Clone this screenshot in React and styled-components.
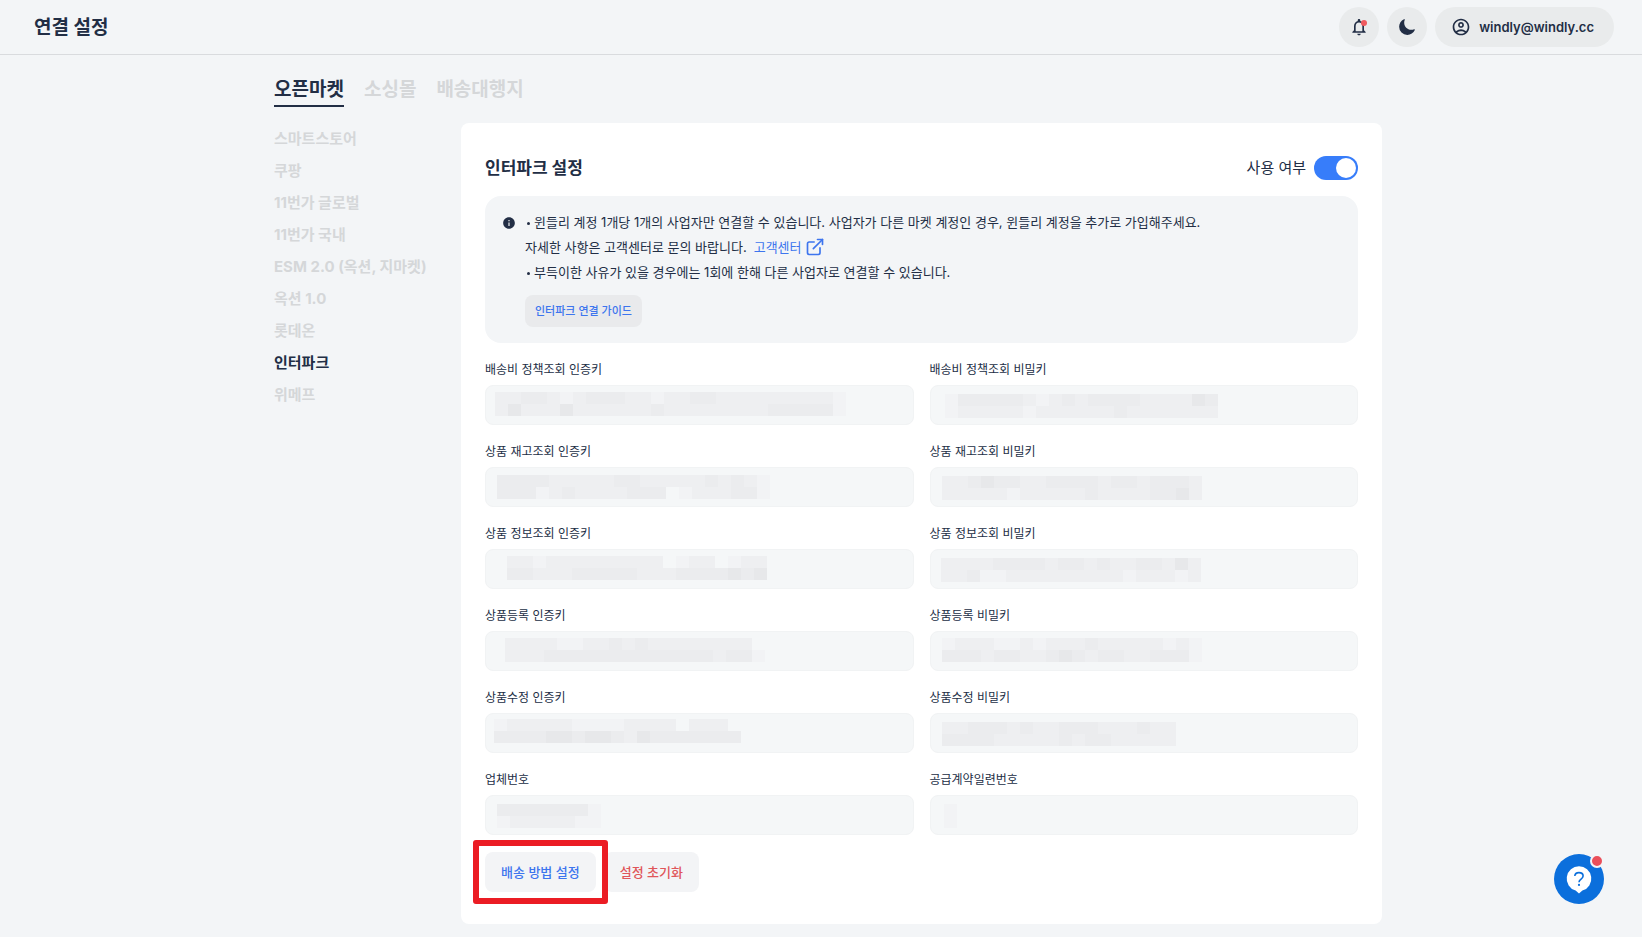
import React, { useState } from "react";
import styled, { createGlobalStyle } from "styled-components";
import {
  MdInfo,
  MdNotificationsNone,
  MdOutlineAccountCircle,
} from "react-icons/md";
import { IoMoon } from "react-icons/io5";
import { FiExternalLink } from "react-icons/fi";

const colors = {
  page: "#f3f5f7",
  text: "#222e45",
  muted: "#d5d7d9",
  line: "#d9dbde",
  chip: "#e9ebec",
  blue: "#3d75ee",
  red: "#e0565a",
};

const GlobalStyle = createGlobalStyle`
  * {
    box-sizing: border-box;
  }
  body {
    margin: 0;
    background: ${colors.page};
    color: ${colors.text};
    font-family: Inter, "Noto Sans CJK KR", sans-serif;
    font-size: 13px;
  }
  button,
  input {
    font: inherit;
    color: inherit;
  }
  h1,
  h2,
  p,
  ul {
    margin: 0;
    padding: 0;
  }
`;

const Header = styled.header`
  display: flex;
  align-items: center;
  justify-content: space-between;
  height: 55px;
  padding: 0 28px 0 34px;
  border-bottom: 1px solid ${colors.line};
`;

const PageTitle = styled.h1`
  padding-top: 2px;
  font-size: 19px;
  line-height: 28px;
  font-weight: 700;
`;

const HeaderActions = styled.div`
  display: flex;
  gap: 8px;
`;

const RoundButton = styled.button`
  position: relative;
  display: flex;
  align-items: center;
  justify-content: center;
  width: 40px;
  height: 40px;
  padding: 0;
  border: none;
  border-radius: 50%;
  background: ${colors.chip};
  cursor: pointer;
`;

const AlertDot = styled.span`
  position: absolute;
  top: 13px;
  right: 12px;
  width: 6px;
  height: 6px;
  border-radius: 50%;
  background: #f05a5f;
`;

const AccountButton = styled.button`
  display: flex;
  align-items: center;
  gap: 8px;
  height: 40px;
  padding: 0 20px 0 16px;
  border: none;
  border-radius: 20px;
  background: ${colors.chip};
  font-size: 13px;
  font-weight: 600;
  cursor: pointer;
`;

const Main = styled.main`
  max-width: 1122px;
  margin: 0 auto;
  padding: 20px 0 13px 14px;
`;

const Tabs = styled.nav`
  display: flex;
  gap: 20px;
`;

const Tab = styled.a`
  border-bottom: 2px solid
    ${({ $active }) => ($active ? colors.text : "transparent")};
  color: ${({ $active }) => ($active ? colors.text : colors.muted)};
  font-size: 19px;
  line-height: 30px;
  font-weight: 700;
  text-decoration: none;
`;

const Columns = styled.div`
  display: grid;
  grid-template-columns: 187px minmax(0, 1fr);
  margin-top: 16px;
`;

const MarketList = styled.ul`
  list-style: none;
`;

const MarketLink = styled.a`
  display: block;
  color: ${({ $active }) => ($active ? colors.text : colors.muted)};
  font-size: 15px;
  line-height: 32px;
  font-weight: 700;
  text-decoration: none;
  white-space: nowrap;
`;

const Card = styled.section`
  padding: 24px 24px 32px;
  border-radius: 8px;
  background: #fff;
`;

const CardHeader = styled.div`
  display: flex;
  align-items: center;
  justify-content: space-between;
  padding: 9px 0 16px;
`;

const CardTitle = styled.h2`
  font-size: 17px;
  line-height: 24px;
  font-weight: 700;
`;

const SwitchLabel = styled.label`
  display: flex;
  align-items: center;
  gap: 8px;
  font-size: 15px;
  line-height: 24px;
  cursor: pointer;
`;

const Switch = styled.input`
  appearance: none;
  display: flex;
  width: 44px;
  height: 24px;
  margin: 0;
  padding: 2px;
  border-radius: 12px;
  background: #c9ccd1;
  cursor: pointer;

  &::before {
    content: "";
    width: 20px;
    height: 20px;
    border-radius: 50%;
    background: #fff;
  }

  &:checked {
    justify-content: flex-end;
    background: #377dfa;
  }
`;

const Notice = styled.div`
  display: flex;
  gap: 8px;
  padding: 16px;
  border-radius: 16px;
  background: ${colors.page};
`;

const NoticeIcon = styled.span`
  display: flex;
  align-items: center;
  width: 16px;
  height: 22px;
  justify-content: center;
`;

const NoticeBody = styled.div`
  display: flex;
  flex-direction: column;
  align-items: flex-start;
  gap: 5px;
  line-height: 20px;
`;

const NoticeLine = styled.p`
  display: flex;
  align-items: center;
  gap: 7px;
  min-height: 20px;
`;

const NoticeItem = styled(NoticeLine)`
  gap: 4px;

  &::before {
    content: "";
    width: 3px;
    height: 3px;
    margin: 2px 0 0 2px;
    border-radius: 50%;
    background: currentColor;
  }
`;

const HelpLink = styled.a`
  display: inline-flex;
  align-items: center;
  gap: 3px;
  color: ${colors.blue};
  text-decoration: none;
`;

const GuideButton = styled.button`
  height: 32px;
  margin-top: 8px;
  padding: 0 10px;
  border: none;
  border-radius: 8px;
  background: #e9eaec;
  color: ${colors.blue};
  font-size: 11px;
  font-weight: 500;
  cursor: pointer;
`;

const FieldGrid = styled.div`
  display: grid;
  grid-template-columns: repeat(2, minmax(0, 1fr));
  gap: 16px;
  margin-top: 16px;
`;

const FieldBox = styled.div`
  display: flex;
  flex-direction: column;
  gap: 4px;
`;

const FieldLabel = styled.label`
  font-size: 12px;
  line-height: 22px;
`;

const InputWrap = styled.div`
  position: relative;
  display: flex;
`;

const TextInput = styled.input`
  width: 100%;
  height: 40px;
  padding: 0 12px;
  border: 1px solid #f1f3f4;
  border-radius: 8px;
  background: #f5f7f8;
  outline: none;
`;

const MaskLayer = styled.svg`
  position: absolute;
  top: 0;
  left: 0;
  pointer-events: none;
`;

const Actions = styled.div`
  display: flex;
  gap: 8px;
  margin-top: 17px;
`;

const Highlight = styled.div`
  position: relative;

  &::after {
    content: "";
    position: absolute;
    inset: -12px;
    border: 6px solid #eb1c24;
    border-radius: 3px;
    pointer-events: none;
  }
`;

const ActionButton = styled.button`
  height: 40px;
  padding: 0 16px 2px;
  border: none;
  border-radius: 8px;
  background: #f3f4f6;
  color: ${({ $danger }) => ($danger ? colors.red : colors.blue)};
  font-weight: 500;
  cursor: pointer;
`;

const ChatButton = styled.button`
  position: fixed;
  right: 38px;
  bottom: 33px;
  width: 50px;
  height: 50px;
  padding: 0;
  border: none;
  border-radius: 50%;
  background: #0b6fdc;
  cursor: pointer;
`;

const ChatDot = styled.span`
  position: absolute;
  top: 0;
  right: 0;
  width: 14px;
  height: 14px;
  border: 2px solid ${colors.page};
  border-radius: 50%;
  background: #ea4f5a;
`;

const tabs = ["오픈마켓", "소싱몰", "배송대행지"];

const markets = [
  "스마트스토어",
  "쿠팡",
  "11번가 글로벌",
  "11번가 국내",
  "ESM 2.0 (옥션, 지마켓)",
  "옥션 1.0",
  "롯데온",
  "인터파크",
  "위메프",
];

// mask: two rows of 13x12 blocks starting at x, y; each digit is a shade
const fields = [
  {
    id: "shipping-key",
    label: "배송비 정책조회 인증키",
    x: 10,
    y: 7,
    mask: ["223321233322122332222222221", "242224222222322222222333331"],
  },
  {
    id: "shipping-secret",
    label: "배송비 정책조회 비밀키",
    x: 15,
    y: 9,
    mask: ["133333212323333222243", "122222122222232222222"],
  },
  {
    id: "stock-key",
    label: "상품 재고조회 인증키",
    x: 12,
    y: 8,
    mask: ["333322222332222232321", "333123222233301222331"],
  },
  {
    id: "stock-secret",
    label: "상품 재고조회 비밀키",
    x: 12,
    y: 9,
    mask: ["22343322333323323332", "22222122222322223342"],
  },
  {
    id: "info-key",
    label: "상품 정보조회 인증키",
    x: 22,
    y: 7,
    mask: ["22122222222201220122", "33222333332223333434"],
  },
  {
    id: "info-secret",
    label: "상품 정보조회 비밀키",
    x: 11,
    y: 9,
    mask: ["22223333233232233242", "22311222222222122212"],
  },
  {
    id: "create-key",
    label: "상품등록 인증키",
    x: 20,
    y: 7,
    mask: ["22221122323222222220", "22233333333333332331"],
  },
  {
    id: "create-secret",
    label: "상품등록 비밀키",
    x: 12,
    y: 7,
    mask: ["12221121222322222121", "33323322343233223331"],
  },
  {
    id: "edit-key",
    label: "상품수정 인증키",
    x: 9,
    y: 6,
    mask: ["1222221111222202220", "3333443443243333333"],
  },
  {
    id: "edit-secret",
    label: "상품수정 비밀키",
    x: 12,
    y: 9,
    mask: ["223332322333222322", "333322222323322222"],
  },
  {
    id: "company",
    label: "업체번호",
    x: 12,
    y: 9,
    mask: ["33333331", "12222211"],
  },
  { id: "contract", label: "공급계약일련번호", x: 14, y: 9, mask: ["1", "1"] },
];

const shades = ["none", "#f2f3f5", "#eeeff1", "#ebecee", "#e7e8ea"];

function Mask({ rows, x, y }) {
  return (
    <MaskLayer width={x + rows[0].length * 13} height={40} aria-hidden="true">
      {rows.map((row, line) =>
        row
          .split("")
          .map((shade, i) => (
            <rect
              key={`${line}-${i}`}
              x={x + i * 13}
              y={y + line * 12}
              width={13}
              height={12}
              fill={shades[shade]}
            />
          ))
      )}
    </MaskLayer>
  );
}

function Field({ id, label, mask, x, y }) {
  return (
    <FieldBox>
      <FieldLabel htmlFor={id}>{label}</FieldLabel>
      <InputWrap>
        <TextInput id={id} type="text" readOnly />
        <Mask rows={mask} x={x} y={y} />
      </InputWrap>
    </FieldBox>
  );
}

function TopBar() {
  return (
    <Header>
      <PageTitle>연결 설정</PageTitle>
      <HeaderActions>
        <RoundButton type="button" aria-label="알림">
          <MdNotificationsNone size={20} />
          <AlertDot />
        </RoundButton>
        <RoundButton type="button" aria-label="다크 모드">
          <IoMoon size={18} />
        </RoundButton>
        <AccountButton type="button">
          <MdOutlineAccountCircle size={20} />
          windly@windly.cc
        </AccountButton>
      </HeaderActions>
    </Header>
  );
}

function App() {
  const [enabled, setEnabled] = useState(true);

  return (
    <>
      <GlobalStyle />
      <TopBar />
      <Main>
        <Tabs>
          {tabs.map((tab) => (
            <Tab key={tab} href="#" $active={tab === "오픈마켓"}>
              {tab}
            </Tab>
          ))}
        </Tabs>
        <Columns>
          <MarketList>
            {markets.map((market) => (
              <li key={market}>
                <MarketLink href="#" $active={market === "인터파크"}>
                  {market}
                </MarketLink>
              </li>
            ))}
          </MarketList>
          <Card>
            <CardHeader>
              <CardTitle>인터파크 설정</CardTitle>
              <SwitchLabel htmlFor="use-market">
                사용 여부
                <Switch
                  id="use-market"
                  type="checkbox"
                  checked={enabled}
                  onChange={() => setEnabled(!enabled)}
                />
              </SwitchLabel>
            </CardHeader>
            <Notice>
              <NoticeIcon>
                <MdInfo size={14} />
              </NoticeIcon>
              <NoticeBody>
                <NoticeItem>
                  윈들리 계정 1개당 1개의 사업자만 연결할 수 있습니다. 사업자가
                  다른 마켓 계정인 경우, 윈들리 계정을 추가로 가입해주세요.
                </NoticeItem>
                <NoticeLine>
                  자세한 사항은 고객센터로 문의 바랍니다.
                  <HelpLink href="#">
                    고객센터
                    <FiExternalLink size={20} />
                  </HelpLink>
                </NoticeLine>
                <NoticeItem>
                  부득이한 사유가 있을 경우에는 1회에 한해 다른 사업자로 연결할
                  수 있습니다.
                </NoticeItem>
                <GuideButton type="button">인터파크 연결 가이드</GuideButton>
              </NoticeBody>
            </Notice>
            <FieldGrid>
              {fields.map((field) => (
                <Field key={field.id} {...field} />
              ))}
            </FieldGrid>
            <Actions>
              <Highlight>
                <ActionButton type="button">배송 방법 설정</ActionButton>
              </Highlight>
              <ActionButton type="button" $danger>
                설정 초기화
              </ActionButton>
            </Actions>
          </Card>
        </Columns>
      </Main>
      <ChatButton type="button" aria-label="문의하기">
        <svg width="50" height="50" viewBox="0 0 50 50" fill="none">
          <path
            d="M25 12.3a12.4 12.4 0 0 1 3.4 24.300L25 39.600l-3.400-3A12.400 12.400 0 0 1 25 12.300z"
            fill="#fff"
          />
          <path
            d="M20.800 22c.2-2.200 1.900-3.400 4.100-3.400 2.400 0 4.200 1.300 4.200 3.400 0 3-4.100 3.100-4.100 6.200"
            stroke="#0b6fdc"
            strokeWidth="1.600"
          />
          <circle cx="25" cy="30.900" r="1.100" fill="#0b6fdc" />
        </svg>
        <ChatDot />
      </ChatButton>
    </>
  );
}

export default App;
